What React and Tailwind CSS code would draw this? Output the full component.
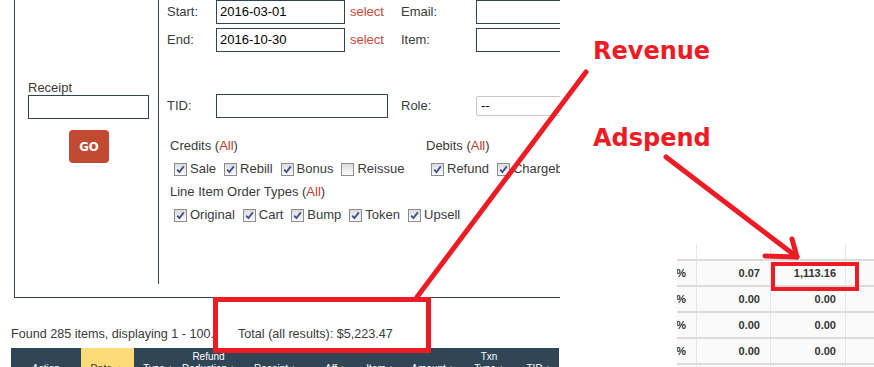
import React from 'react'

const ink = 'text-[#3a3a3a]'

function Check({ checked = true }) {
  return (
    <span className="w-[13px] h-[13px] border border-[#8a8c8e] bg-gradient-to-b from-[#dcdcdc] to-[#fbfbfb] flex items-center justify-center shrink-0">
      {checked && (
        <svg width="9" height="9" viewBox="0 0 9 9">
          <path d="M1.2 4.6 L3.4 7 L7.8 1.4" fill="none" stroke="#3d4f8c" strokeWidth="1.8" />
        </svg>
      )}
    </span>
  )
}

function Opt({ label, checked }) {
  return (
    <span className="flex items-center gap-[3px] whitespace-nowrap shrink-0">
      <Check checked={checked} />
      <span>{label}</span>
    </span>
  )
}

function All({ title }) {
  return (
    <div className="h-[16px] leading-[16px] whitespace-nowrap">
      {title} (<span className="text-[#c0392b]">All</span>)
    </div>
  )
}

const headCols = [
  { w: 'w-[70px]', a: '', b: 'Action' },
  { w: 'w-[53px]', a: '', b: 'Date', sort: true, yellow: true },
  { w: 'w-[48px]', a: '', b: 'Type ♦' },
  { w: 'w-[53px]', a: 'Refund', b: 'Deduction ♦' },
  { w: 'w-[80px]', a: '', b: 'Receipt ♦' },
  { w: 'w-[40px]', a: '', b: 'Aff ♦' },
  { w: 'w-[50px]', a: '', b: 'Item ♦' },
  { w: 'w-[55px]', a: '', b: 'Amount ♦' },
  { w: 'w-[58px]', a: 'Txn', b: 'Type ♦' },
  { w: 'w-[41px]', a: '', b: 'TID ♦' },
]

function LeftPanel() {
  return (
    <div className={`w-[560px] h-full overflow-hidden shrink-0 ${ink}`}>
      <div className="ml-[14px] h-[298px] border-l border-b border-[#2f4554] flex">
        {/* colonne reçu */}
        <div className="w-[144px] shrink-0 h-[284px] border-r border-[#2f4554] pl-[13px] pt-[80px] flex flex-col items-start">
          <div className="h-[15px] leading-[15px]">Receipt</div>
          <div className="w-[121px] h-[24px] border border-[#2f4554]" />
          <button className="mt-[11px] ml-[41px] w-[40px] h-[33px] rounded-[4px] bg-[#c24a32] text-white font-bold text-[13px] font-['DejaVu_Sans_Condensed','Liberation_Sans_Narrow',sans-serif]">
            GO
          </button>
        </div>

        {/* filtres */}
        <div className="flex-1 pl-[8px] overflow-hidden">
          <div className="flex items-center h-[24px] whitespace-nowrap">
            <span className="w-[49px] shrink-0">Start:</span>
            <div className="w-[129px] shrink-0 h-[24px] border border-[#2f4554] pl-[3px] leading-[22px] text-black">2016-03-01</div>
            <span className="w-[56px] shrink-0 pl-[5px] text-[#c9483c]">select</span>
            <span className="w-[75px] shrink-0">Email:</span>
            <div className="w-[120px] h-[24px] border border-[#2f4554] shrink-0" />
          </div>
          <div className="flex items-center h-[24px] mt-[4px] whitespace-nowrap">
            <span className="w-[49px] shrink-0">End:</span>
            <div className="w-[129px] shrink-0 h-[24px] border border-[#2f4554] pl-[3px] leading-[22px] text-black">2016-10-30</div>
            <span className="w-[56px] shrink-0 pl-[5px] text-[#c9483c]">select</span>
            <span className="w-[75px] shrink-0">Item:</span>
            <div className="w-[120px] h-[24px] border border-[#2f4554] shrink-0" />
          </div>
          <div className="flex items-center h-[24px] mt-[42px] whitespace-nowrap">
            <span className="w-[49px] shrink-0">TID:</span>
            <div className="w-[172px] shrink-0 h-[24px] border border-[#2f4554]" />
            <span className="w-[75px] shrink-0 ml-[13px]">Role:</span>
            <div className="w-[120px] h-[20px] border border-[#c8c8c8] rounded-[2px] pl-[4px] leading-[18px] text-black shrink-0">--</div>
          </div>

          <div className="flex mt-[20px] pl-[3px]">
            <div className="w-[256px] shrink-0">
              <All title="Credits" />
              <div className="flex items-center gap-[8px] h-[20px] mt-[5px] pl-[4px]">
                <Opt label="Sale" />
                <Opt label="Rebill" />
                <Opt label="Bonus" />
                <Opt label="Reissue" checked={false} />
              </div>
              <div className="mt-[5px] whitespace-nowrap">
                <All title="Line Item Order Types" />
              </div>
              <div className="flex items-center gap-[8px] h-[20px] mt-[5px] pl-[4px]">
                <Opt label="Original" />
                <Opt label="Cart" />
                <Opt label="Bump" />
                <Opt label="Token" />
                <Opt label="Upsell" />
              </div>
            </div>
            <div className="shrink-0">
              <All title="Debits" />
              <div className="flex items-center gap-[8px] h-[20px] mt-[5px] pl-[5px]">
                <Opt label="Refund" />
                <Opt label="Chargeback" />
              </div>
            </div>
          </div>
        </div>
      </div>

      <div className="mt-[28px] ml-[11px] h-[16px] leading-[16px] whitespace-nowrap text-[12.6px]">
        Found 285 items, displaying 1 - 100.
        <span className="ml-[24px]">Total (all results): $5,223.47</span>
      </div>

      <div className="mt-[6px] ml-[11px] w-[548px] h-[40px] bg-[#304656] flex text-[10px] text-white leading-[12px]">
        {headCols.map((c, i) => (
          <div key={i} className={`${c.w} pt-[3px] text-center whitespace-nowrap ${c.yellow ? 'bg-[#fcdb78] text-[#333]' : ''}`}>
            <div className="h-[12px]">{c.a}</div>
            <div>
              {c.b}
              {c.sort && <span className="text-[#d0312d]"> ▲</span>}
            </div>
          </div>
        ))}
      </div>
    </div>
  )
}

const rows = [
  ['0.07', '1,113.16'],
  ['0.00', '0.00'],
  ['0.00', '0.00'],
  ['0.00', '0.00'],
  ['0.00', '0.00'],
]

function RightPanel() {
  return (
    <div className="w-[314px] h-full flex flex-col">
      <div className="pl-[33px] mt-[37px] h-[28px] leading-[28px] text-[24px] font-bold text-[#ed1c24] font-['DejaVu_Sans',sans-serif]">
        Revenue
      </div>
      <div className="pl-[33px] mt-[59px] h-[28px] leading-[28px] text-[24px] font-bold text-[#ed1c24] font-['DejaVu_Sans',sans-serif]">
        Adspend
      </div>

      <div className="ml-[117px] mt-[93px] text-[11px] font-bold text-[#333]">
        <div className="flex h-[14px]">
          <div className="w-[20px] border-r border-[#e6e6e6]" />
          <div className="w-[74px] border-r border-[#e6e6e6]" />
          <div className="w-[75px] border-r border-[#e6e6e6]" />
          <div className="flex-1" />
        </div>
        {rows.map((r, i) => (
          <div key={i} className="flex h-[26px] border-t-2 border-[#dcdcdc] bg-[#fafafa] leading-[24px]">
            <div className="w-[20px] border-r border-[#e6e6e6] flex justify-end overflow-hidden pr-[10px] whitespace-nowrap">
              <span>0%</span>
            </div>
            <div className="w-[74px] border-r border-[#e6e6e6] text-right pr-[10px]">{r[0]}</div>
            <div className="w-[75px] border-r border-[#e6e6e6] text-right pr-[9px]">{r[1]}</div>
            <div className="flex-1" />
          </div>
        ))}
      </div>
    </div>
  )
}

export default function App() {
  return (
    <div className="relative w-[874px] h-[367px] overflow-hidden bg-white text-[13px] font-['Liberation_Sans',Arial,sans-serif]">
      <div className="flex h-full">
        <LeftPanel />
        <RightPanel />
      </div>

      {/* annotations rouges par-dessus */}
      <svg className="absolute inset-0 pointer-events-none" width="874" height="367" viewBox="0 0 874 367">
        <g fill="none" stroke="#ed1c24" strokeWidth="5" strokeLinecap="round" strokeLinejoin="round">
          <rect x="215.5" y="299.5" width="213" height="51" strokeLinecap="butt" strokeLinejoin="miter" />
          <line x1="586" y1="72" x2="417" y2="297" />
          <line x1="666" y1="157" x2="797" y2="257" />
          <polyline points="765,256 797,257 792,239" />
          <rect x="773" y="264" width="84" height="25" strokeWidth="4" strokeLinecap="butt" strokeLinejoin="miter" />
        </g>
      </svg>
    </div>
  )
}
